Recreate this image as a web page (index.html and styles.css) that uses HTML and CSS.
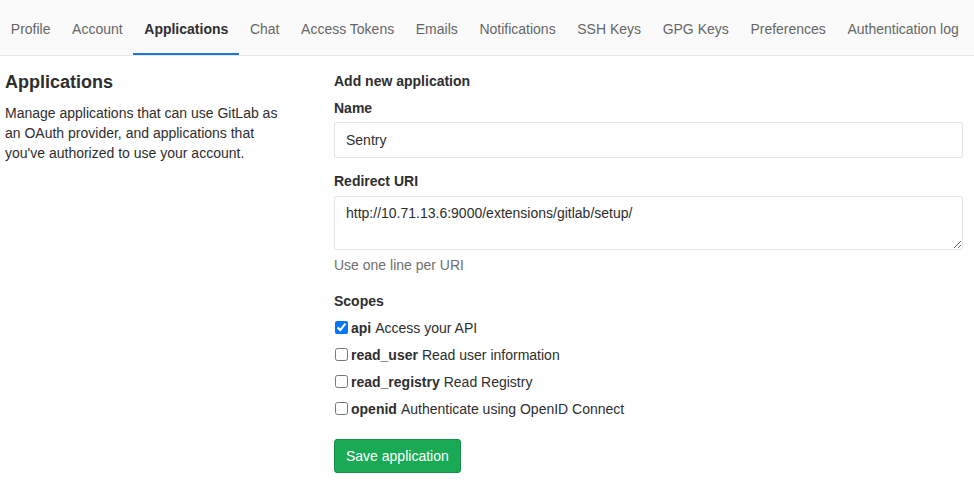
FILE: index.html
```html
<!DOCTYPE html>
<html>
<head>
<meta charset="utf-8">
<link rel="stylesheet" href="styles.css">
</head>
<body>
<nav class="tabs">
  <a class="tab">Profile</a>
  <a class="tab">Account</a>
  <a class="tab active">Applications</a>
  <a class="tab">Chat</a>
  <a class="tab">Access Tokens</a>
  <a class="tab">Emails</a>
  <a class="tab">Notifications</a>
  <a class="tab">SSH Keys</a>
  <a class="tab">GPG Keys</a>
  <a class="tab">Preferences</a>
  <a class="tab">Authentication log</a>
</nav>
<main class="page">
  <section class="intro">
    <h2 class="title">Applications</h2>
    <p class="desc">Manage applications that can use GitLab as an OAuth provider, and applications that you've authorized to use your account.</p>
  </section>
  <section class="form">
    <h4 class="form-title">Add new application</h4>
    <label class="label">Name</label>
    <input class="input" type="text" value="Sentry">
    <label class="label label-uri">Redirect URI</label>
    <textarea class="textarea">http://10.71.13.6:9000/extensions/gitlab/setup/</textarea>
    <div class="help">Use one line per URI</div>
    <label class="label label-scopes">Scopes</label>
    <ul class="scopes">
      <li class="scope"><input type="checkbox" checked><b>api</b> Access your API</li>
      <li class="scope"><input type="checkbox"><b>read_user</b> Read user information</li>
      <li class="scope"><input type="checkbox"><b>read_registry</b> Read Registry</li>
      <li class="scope"><input type="checkbox"><b>openid</b> Authenticate using OpenID Connect</li>
    </ul>
    <button class="btn">Save application</button>
  </section>
</main>
</body>
</html>
```
FILE: styles.css
```css
* { box-sizing: border-box; }
html, body { margin: 0; padding: 0; background: #fff; }
body {
  font-family: "Liberation Sans", Arial, sans-serif;
  font-size: 14px;
  color: #2e2e2e;
}
.tabs {
  display: flex;
  height: 56px;
  background: #fafafa;
  border-bottom: 1px solid #e5e5e5;
  white-space: nowrap;
}
.tab {
  display: flex;
  align-items: center;
  padding: 4px 10.8px 0;
  color: #666;
  font-size: 14px;
  border-bottom: 2px solid transparent;
}
.tab.active {
  color: #2e2e2e;
  font-weight: bold;
  border-bottom-color: #1f78d1;
}
.page {
  display: grid;
  grid-template-columns: 329px 629px;
  padding: 0 0 0 5px;
}
.title {
  margin: 14px 0 0;
  font-size: 18px;
  line-height: 24px;
  font-weight: bold;
  color: #2e2e2e;
}
.desc {
  margin: 9px 0 0;
  line-height: 20px;
  width: 290px;
}
.form {
  display: flex;
  flex-direction: column;
  align-items: flex-start;
  padding-top: 73px;
  margin-top: -58px;
}
.form-title {
  margin: 0;
  font-size: 14px;
  line-height: 20px;
  font-weight: bold;
}
.label {
  font-weight: bold;
  line-height: 20px;
  margin-top: 7px;
}
.input, .textarea {
  width: 629px;
  font-family: inherit;
  font-size: 14px;
  color: #2e2e2e;
  border: 1px solid #e5e5e5;
  border-radius: 2px;
  padding: 0 11px;
  margin-top: 4px;
  background: #fff;
}
.input { height: 36px; }
.label-uri { margin-top: 13px; }
.textarea {
  height: 54px;
  padding-top: 6px;
  line-height: 20px;
  resize: vertical;
  margin-top: 5px;
}
.help {
  color: #707070;
  line-height: 20px;
  margin-top: 5px;
}
.label-scopes { margin-top: 16px; }
.scopes {
  list-style: none;
  margin: 3px 0 0;
  padding: 0;
}
.scope {
  display: flex;
  align-items: center;
  height: 27px;
  line-height: 20px;
}
.scope input {
  margin: 0 3px 0 1px;
  width: 13px;
  height: 13px;
}
.scope b { margin-right: 4px; }
.btn {
  margin-top: 17px;
  height: 34px;
  padding: 0 11px;
  font-family: inherit;
  font-size: 14px;
  color: #fff;
  background: #1aaa55;
  border: 1px solid #168f48;
  border-radius: 3px;
}
```
